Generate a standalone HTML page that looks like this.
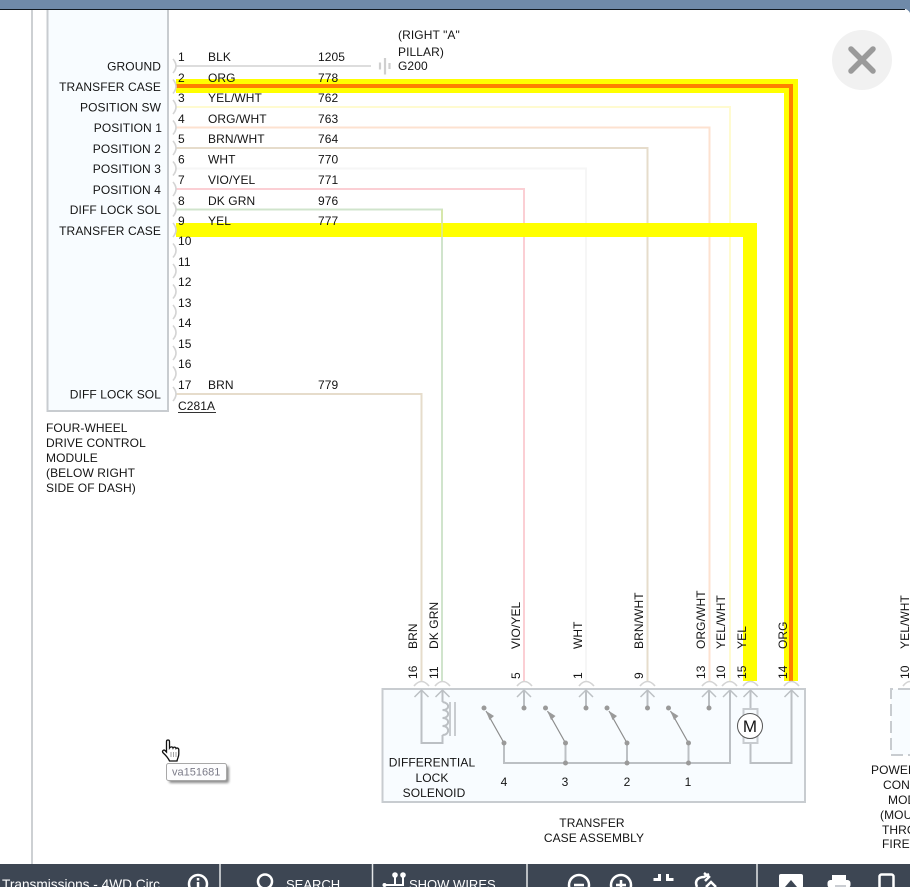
<!DOCTYPE html>
<html>
<head>
<meta charset="utf-8">
<style>
html,body{margin:0;padding:0;background:#fff;width:910px;height:887px;overflow:hidden}
svg{display:block}
text{font-family:"Liberation Sans",Arial,sans-serif;font-size:12px;fill:#141414;letter-spacing:.09px}
.l{text-anchor:end}
.m{text-anchor:middle}
.b{font-size:14px;fill:#fff;letter-spacing:0}
.w{fill:none;stroke-width:2}
.g{fill:none;stroke:#c8ccd0;stroke-width:2}
.d{fill:none;stroke:#bcc0c4;stroke-width:2}
.a{fill:none;stroke:#d4d4d4;stroke-width:1.6}
.p{fill:#9a9a9a}
</style>
</head>
<body>
<svg width="910" height="887" viewBox="0 0 910 887" xmlns="http://www.w3.org/2000/svg">
<defs><filter id="s" x="-20%" y="-30%" width="140%" height="170%"><feGaussianBlur stdDeviation="1.300"/></filter></defs>
<rect width="910" height="887" fill="#fff"/>
<!-- top bar -->
<rect width="910" height="9" fill="#6f8aa9"/>
<rect y="9" width="905" height="1" fill="#10181f"/>
<path d="M904 9Q908 9 910 13V9Z" fill="#6f8aa9"/>
<!-- left rail + module -->
<rect x="31" y="10" width="2" height="854" fill="#cdd0d3"/>
<path d="M47.500 10V411H168V10" fill="#f8fcff" stroke="#c8ccd0" stroke-width="2"/>
<!-- faint wires -->
<path class="w" stroke="#dddddd" d="M176 66H371"/>
<path class="w" stroke="#fffbd0" d="M176 107H730V681"/>
<path class="w" stroke="#fde2d0" d="M176 127.500H709.500V681"/>
<path class="w" stroke="#e6dccb" d="M176 148H647.500V681"/>
<path class="w" stroke="#f6f6f6" d="M176 168.500H586V681"/>
<path class="w" stroke="#fbcfd4" d="M176 189H524V681"/>
<path class="w" stroke="#d0e4cc" d="M176 209.500H442V681"/>
<path class="w" stroke="#e6dccb" d="M176 394H421.500V681"/>
<!-- ground symbol -->
<path d="M380 62.500V69.500M385 58V74.500M389.500 63V69" stroke="#cfcfcf" stroke-width="2.200" fill="none"/>
<!-- highlighted wires -->
<path d="M176 79H798V681H784V93H176Z" fill="#ffff00"/>
<path d="M176 84H793V681H789V88H176Z" fill="#ff7f00"/>
<path d="M176 223H757V681H743V237H176Z" fill="#ffff00"/>
<path d="M442 209.500V237" stroke="#d8e8a0" stroke-width="1.500" fill="none"/>
<!-- module pin arcs -->
<g class="a">
<path class="a" d="M173 59Q179 66 173 73"/><path class="a" d="M173 79.500Q179 86.500 173 93.500"/><path class="a" d="M173 100Q179 107 173 114"/><path class="a" d="M173 120.500Q179 127.500 173 134.500"/><path class="a" d="M173 141Q179 148 173 155"/><path class="a" d="M173 161.500Q179 168.500 173 175.500"/><path class="a" d="M173 182Q179 189 173 196"/><path class="a" d="M173 202.500Q179 209.500 173 216.500"/><path class="a" d="M173 223Q179 230 173 237"/><path class="a" d="M173 243.500Q179 250.500 173 257.500"/><path class="a" d="M173 264Q179 271 173 278"/><path class="a" d="M173 284.500Q179 291.500 173 298.500"/><path class="a" d="M173 305Q179 312 173 319"/><path class="a" d="M173 325.500Q179 332.500 173 339.500"/><path class="a" d="M173 346Q179 353 173 360"/><path class="a" d="M173 366.500Q179 373.500 173 380.500"/><path class="a" d="M173 387Q179 394 173 401"/>
</g>
<!-- module labels -->
<text class="l" x="161" y="70.500">GROUND</text>
<text class="l" x="161" y="91">TRANSFER CASE</text>
<text class="l" x="161" y="111.500">POSITION SW</text>
<text class="l" x="162" y="132">POSITION 1</text>
<text class="l" x="161" y="153">POSITION 2</text>
<text class="l" x="161" y="173">POSITION 3</text>
<text class="l" x="161" y="194">POSITION 4</text>
<text class="l" x="161" y="214">DIFF LOCK SOL</text>
<text class="l" x="161" y="235">TRANSFER CASE</text>
<text class="l" x="161" y="398.500">DIFF LOCK SOL</text>
<!-- pin rows -->
<text x="178" y="61">1</text><text x="208" y="61">BLK</text><text x="318" y="61">1205</text>
<text x="178" y="82">2</text><text x="208" y="82">ORG</text><text x="318" y="82">778</text>
<text x="178" y="102">3</text><text x="208" y="102">YEL/WHT</text><text x="318" y="102">762</text>
<text x="178" y="123">4</text><text x="208" y="123">ORG/WHT</text><text x="318" y="123">763</text>
<text x="178" y="143">5</text><text x="208" y="143">BRN/WHT</text><text x="318" y="143">764</text>
<text x="178" y="163.500">6</text><text x="208" y="163.500">WHT</text><text x="318" y="163.500">770</text>
<text x="178" y="184">7</text><text x="208" y="184">VIO/YEL</text><text x="318" y="184">771</text>
<text x="178" y="205">8</text><text x="208" y="205">DK GRN</text><text x="318" y="205">976</text>
<text x="178" y="225">9</text><text x="208" y="225">YEL</text><text x="318" y="225">777</text>
<text x="178" y="245">10</text>
<text x="178" y="266">11</text>
<text x="178" y="286">12</text>
<text x="178" y="307">13</text>
<text x="178" y="327">14</text>
<text x="178" y="348">15</text>
<text x="178" y="368">16</text>
<text x="178" y="389">17</text><text x="208" y="389">BRN</text><text x="318" y="389">779</text>
<text x="178" y="410">C281A</text>
<path d="M178 412.500H216" stroke="#333" stroke-width="1"/>
<text x="398" y="39">(RIGHT "A"</text>
<text x="398" y="56">PILLAR)</text>
<text x="398" y="70">G200</text>
<text x="46" y="432">FOUR-WHEEL</text>
<text x="46" y="447">DRIVE CONTROL</text>
<text x="46" y="462">MODULE</text>
<text x="46" y="477">(BELOW RIGHT</text>
<text x="46" y="492">SIDE OF DASH)</text>
<!-- rotated labels -->
<text transform="translate(417 649) rotate(-90)">BRN</text>
<text transform="translate(438 649) rotate(-90)">DK GRN</text>
<text transform="translate(520 649) rotate(-90)">VIO/YEL</text>
<text transform="translate(582 649) rotate(-90)">WHT</text>
<text transform="translate(643 649) rotate(-90)">BRN/WHT</text>
<text transform="translate(705 649) rotate(-90)">ORG/WHT</text>
<text transform="translate(725 649) rotate(-90)">YEL/WHT</text>
<text transform="translate(746 649) rotate(-90)">YEL</text>
<text transform="translate(787 649) rotate(-90)">ORG</text>
<text transform="translate(909 649) rotate(-90)">YEL/WHT</text>
<text transform="translate(417 679) rotate(-90)">16</text>
<text transform="translate(438 679) rotate(-90)">11</text>
<text transform="translate(520 679) rotate(-90)">5</text>
<text transform="translate(582 679) rotate(-90)">1</text>
<text transform="translate(643 679) rotate(-90)">9</text>
<text transform="translate(705 679) rotate(-90)">13</text>
<text transform="translate(725 679) rotate(-90)">10</text>
<text transform="translate(746 679) rotate(-90)">15</text>
<text transform="translate(787 679) rotate(-90)">14</text>
<text transform="translate(909 679) rotate(-90)">10</text>
<!-- transfer case box -->
<rect x="382.500" y="689" width="422.500" height="113" fill="#f8fcff" stroke="#c8ccd0" stroke-width="2"/>
<!-- connector arcs -->
<g>
<path class="a" d="M414 686Q421.500 677 429 686"/><path class="a" d="M435 686Q442.500 677 450 686"/><path class="a" d="M517 686Q524.500 677 532 686"/><path class="a" d="M579 686Q586 677 594 686"/><path class="a" d="M640 686Q647.500 677 655 686"/><path class="a" d="M702 686Q709.500 677 717 686"/><path class="a" d="M722 686Q730 677 737 686"/><path class="a" d="M743 686Q750.500 677 758 686"/><path class="a" d="M784 686Q791.500 677 799 686"/><path class="a" d="M903 686Q910 677 917 686"/>
</g>
<!-- arrows -->
<path class="d" style="stroke-width:1.500" d="M414.500 697L421.500 690L428.500 697M435.500 697L442.500 690L449.500 697M517 697L524 690L531 697M579 697L586 690L593 697M640.500 697L647.500 690L654.500 697M702 697L709 690L716 697M723 697L730 690L737 697M743.500 697L750.500 690L757.500 697M784.500 697L791.500 690L798.500 697"/>
<!-- internal wiring -->
<path class="d" d="M421.500 690V743H442.500V735"/>
<path class="d" d="M442.500 690V702"/>
<path class="d" d="M442.500 702C450 703 450 710 442.500 710C450 710 450 718 442.500 718C450 718 450 726 442.500 726C450 726 450 735 442.500 735"/>
<path d="M450 702V736M455 702V736" stroke="#c8ccd0" stroke-width="2" fill="none"/>
<path class="d" d="M524 690V708M586 690V708M647.500 690V708M709 690V708"/>
<path class="d" d="M504 743V763H730V690M565.500 743V763M627 743V763M688.500 743V763"/>
<path d="M504 743L486 711M565.500 743L547.500 711M627 743L609 711M688.500 743L670.500 711" stroke="#8c8c8c" stroke-width="1.200" fill="none"/>
<path class="p" d="M486 711L494 716L489.500 720ZM547.500 711L555.500 716L551 720ZM609 711L617 716L612.500 720ZM670.500 711L678.500 716L674 720Z"/>
<g class="p">
<circle cx="484" cy="708" r="2.500"/><circle cx="545.500" cy="708" r="2.500"/><circle cx="607" cy="708" r="2.500"/><circle cx="668.500" cy="708" r="2.500"/>
<circle cx="524" cy="708" r="2.500"/><circle cx="586" cy="708" r="2.500"/><circle cx="647.500" cy="708" r="2.500"/><circle cx="709" cy="708" r="2.500"/>
<circle cx="504" cy="743" r="2.500"/><circle cx="565.500" cy="743" r="2.500"/><circle cx="627" cy="743" r="2.500"/><circle cx="688.500" cy="743" r="2.500"/>
<circle cx="565.500" cy="763" r="2.500"/><circle cx="627" cy="763" r="2.500"/><circle cx="688.500" cy="763" r="2.500"/>
</g>
<!-- motor -->
<path class="d" d="M750.500 690V709M750.500 743V763H791.500V690"/>
<rect x="743.500" y="709" width="14" height="34" fill="#f8fcff" stroke="#c8ccd0" stroke-width="2"/>
<circle cx="750" cy="726" r="12.500" fill="#fff" stroke="#555" stroke-width="1"/>
<text class="m" x="750" y="732" style="font-size:17px">M</text>
<!-- box labels -->
<text class="m" x="432" y="766.500">DIFFERENTIAL</text>
<text class="m" x="432" y="782">LOCK</text>
<text class="m" x="434" y="797">SOLENOID</text>
<text class="m" x="504" y="786">4</text>
<text class="m" x="565" y="786">3</text>
<text class="m" x="627" y="786">2</text>
<text class="m" x="688" y="786">1</text>
<text class="m" x="592" y="827">TRANSFER</text>
<text class="m" x="594" y="842">CASE ASSEMBLY</text>
<!-- right clipped component -->
<path d="M910 689H891V755H910" fill="#f8fcff" stroke="#c8ccd0" stroke-width="2" stroke-dasharray="12 5"/>
<text x="871" y="774">POWER</text>
<text x="883" y="789">CONTROL</text>
<text x="888" y="804">MODULE</text>
<text x="880" y="819">(MOUNTED</text>
<text x="882" y="834">THROUGH</text>
<text x="882" y="848">FIREWALL</text>
<!-- close button -->
<circle cx="862" cy="60" r="30" fill="#f1f1f1"/>
<path d="M851 49L873 71M873 49L851 71" stroke="#9a9a9a" stroke-width="5.500" stroke-linecap="round"/>
<!-- hand cursor -->
<path d="M166.500 741.500C166.500 739.500 169.500 739.500 169.500 741.500V748C170.500 746.500 172.500 746.500 173 748C173.500 746.800 175.500 746.800 176 748.500C176.800 747.500 178.800 748 178.800 750V754C178.800 757 177.500 758 177 761H169.500C168.500 758.500 166 755.500 162.800 752.500C161.800 750.500 164 749.500 165 750.500L166.500 752Z" fill="#fff" stroke="#111" stroke-width="1.300"/>
<path d="M171 752V757M173.500 752V757M176 752V757" stroke="#666" stroke-width=".6"/>
<!-- tooltip -->
<rect x="169" y="766" width="60" height="17" rx="2" fill="#000" opacity=".45" filter="url(#s)"/>
<rect x="166.500" y="763.500" width="60" height="17" rx="2" fill="#fdfdfe" stroke="#a8a8a8" stroke-width="1"/>
<text x="172" y="775.500" style="font-size:11px;fill:#7b7b88;letter-spacing:0">va151681</text>
<!-- bottom bar -->
<rect y="864" width="910" height="23" fill="#3d4653"/>
<path d="M220 864V887M372.500 864V887M527 864V887M757 864V887" stroke="#e4e6e8" stroke-width="1.500"/>
<text class="b" x="2" y="889" textLength="158" lengthAdjust="spacingAndGlyphs">Transmissions - 4WD Circ</text>
<circle cx="198" cy="884" r="9" fill="none" stroke="#fff" stroke-width="2.500"/>
<rect x="196.800" y="878" width="2.500" height="2.500" fill="#fff"/>
<rect x="196.800" y="882" width="2.500" height="6" fill="#fff"/>
<circle cx="265" cy="881.500" r="7" fill="none" stroke="#fff" stroke-width="2.500"/>
<text class="b" x="286" y="889" style="font-size:13px">SEARCH</text>
<path d="M385 885H403V876M395 876V885" fill="none" stroke="#fff" stroke-width="2"/>
<circle cx="384.500" cy="885" r="2" fill="#fff"/>
<circle cx="395" cy="875" r="2.800" fill="#fff"/><circle cx="403" cy="875" r="2.800" fill="#fff"/>
<text class="b" x="409" y="889" style="font-size:13px">SHOW WIRES</text>
<circle cx="579" cy="885" r="10" fill="none" stroke="#fff" stroke-width="2.500"/>
<path d="M574 885H584" stroke="#fff" stroke-width="2.500"/>
<circle cx="621" cy="885" r="10" fill="none" stroke="#fff" stroke-width="2.500"/>
<path d="M616 885H626M621 880V890" stroke="#fff" stroke-width="2.500"/>
<path d="M653.500 879.500H659.500V874M667.500 874V879.500H673.500" fill="none" stroke="#fff" stroke-width="3"/>
<path d="M697 887C694 880 699 877 704 877L709 874" fill="none" stroke="#fff" stroke-width="2.500"/>
<path d="M704 873L709 877L705 881M706 887L711 882L716 887" fill="none" stroke="#fff" stroke-width="2.500"/>
<rect x="779" y="874" width="24" height="14" rx="2" fill="#fff"/>
<path d="M785 887L791 880L797 887Z" fill="#3d4653"/>
<rect x="832" y="875" width="14" height="6" fill="#fff"/>
<rect x="827.500" y="880" width="23" height="8" rx="3" fill="#fff"/>
<path d="M835 886H846" stroke="#b8bcc2" stroke-width="1.500"/>
<rect x="879.500" y="874.500" width="14" height="15" rx="2" fill="none" stroke="#fff" stroke-width="2.500"/>
</svg>
</body>
</html>
